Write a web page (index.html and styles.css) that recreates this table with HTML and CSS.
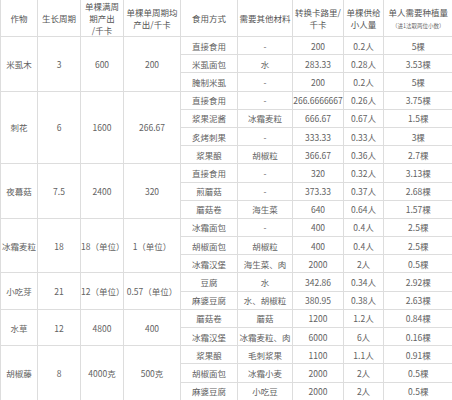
FILE: index.html
```html
<!DOCTYPE html>
<html lang="zh-CN">
<head>
<meta charset="utf-8">
<link rel="stylesheet" href="styles.css">
</head>
<body>
<table class="crops">
<colgroup>
<col class="c1"><col class="c2"><col class="c3"><col class="c4"><col class="c5"><col class="c6"><col class="c7"><col class="c8"><col class="c9">
</colgroup>
<thead>
<tr class="head">
<th>作物</th>
<th>生长周期</th>
<th>单棵满周<br>期产出<br>/千卡</th>
<th>单棵单周期均<br>产出/千卡</th>
<th>食用方式</th>
<th>需要其他材料</th>
<th>转换卡路里/<br>千卡</th>
<th>单棵供给<br>小人量</th>
<th>单人需要种植量<br><span class="note">（进1法取两位小数）</span></th>
</tr>
</thead>
<tbody>
<tr><td rowspan="3">米虱木</td><td rowspan="3">3</td><td rowspan="3">600</td><td rowspan="3">200</td><td>直接食用</td><td>-</td><td>200</td><td>0.2人</td><td>5棵</td></tr>
<tr><td>米虱面包</td><td>水</td><td>283.33</td><td>0.28人</td><td>3.53棵</td></tr>
<tr><td>腌制米虱</td><td>-</td><td>200</td><td>0.2人</td><td>5棵</td></tr>

<tr><td rowspan="4">刺花</td><td rowspan="4">6</td><td rowspan="4">1600</td><td rowspan="4">266.67</td><td>直接食用</td><td>-</td><td>266.6666667</td><td>0.26人</td><td>3.75棵</td></tr>
<tr><td>浆果泥酱</td><td>冰霜麦粒</td><td>666.67</td><td>0.67人</td><td>1.5棵</td></tr>
<tr><td>炙烤刺果</td><td>-</td><td>333.33</td><td>0.33人</td><td>3棵</td></tr>
<tr><td>浆果酿</td><td>胡椒粒</td><td>366.67</td><td>0.36人</td><td>2.7棵</td></tr>

<tr><td rowspan="3">夜幕菇</td><td rowspan="3">7.5</td><td rowspan="3">2400</td><td rowspan="3">320</td><td>直接食用</td><td>-</td><td>320</td><td>0.32人</td><td>3.13棵</td></tr>
<tr><td>煎蘑菇</td><td>-</td><td>373.33</td><td>0.37人</td><td>2.68棵</td></tr>
<tr><td>蘑菇卷</td><td>海生菜</td><td>640</td><td>0.64人</td><td>1.57棵</td></tr>

<tr><td rowspan="3">冰霜麦粒</td><td rowspan="3">18</td><td rowspan="3">18（单位）</td><td rowspan="3">1（单位）</td><td>冰霜面包</td><td>-</td><td>400</td><td>0.4人</td><td>2.5棵</td></tr>
<tr><td>胡椒面包</td><td>胡椒粒</td><td>400</td><td>0.4人</td><td>2.5棵</td></tr>
<tr><td>冰霜汉堡</td><td>海生菜、肉</td><td>2000</td><td>2人</td><td>0.5棵</td></tr>

<tr><td rowspan="2">小吃芽</td><td rowspan="2">21</td><td rowspan="2">12（单位）</td><td rowspan="2">0.57（单位）</td><td>豆腐</td><td>水</td><td>342.86</td><td>0.34人</td><td>2.92棵</td></tr>
<tr><td>麻婆豆腐</td><td>水、胡椒粒</td><td>380.95</td><td>0.38人</td><td>2.63棵</td></tr>

<tr><td rowspan="2">水草</td><td rowspan="2">12</td><td rowspan="2">4800</td><td rowspan="2">400</td><td>蘑菇卷</td><td>蘑菇</td><td>1200</td><td>1.2人</td><td>0.84棵</td></tr>
<tr><td>冰霜汉堡</td><td>冰霜麦粒、肉</td><td>6000</td><td>6人</td><td>0.16棵</td></tr>

<tr><td rowspan="3">胡椒藤</td><td rowspan="3">8</td><td rowspan="3">4000克</td><td rowspan="3">500克</td><td>浆果酿</td><td>毛刺浆果</td><td>1100</td><td>1.1人</td><td>0.91棵</td></tr>
<tr><td>胡椒面包</td><td>冰霜小麦</td><td>2000</td><td>2人</td><td>0.5棵</td></tr>
<tr><td>麻婆豆腐</td><td>小吃豆</td><td>2000</td><td>2人</td><td>0.5棵</td></tr>
</tbody>
</table>
</body>
</html>
```

FILE: styles.css
```css
html, body {
  margin: 0;
  padding: 0;
  background: #ffffff;
}

.crops {
  border-collapse: collapse;
  table-layout: fixed;
  width: 452px;
  font-family: "Noto Sans CJK SC", "Noto Sans", sans-serif;
  font-size: 8.5px;
  color: #626262;
}

.c1 { width: 37px; }
.c2 { width: 43px; }
.c3 { width: 43px; }
.c4 { width: 57px; }
.c5 { width: 57px; }
.c6 { width: 55px; }
.c7 { width: 51px; }
.c8 { width: 40px; }
.c9 { width: 69px; }

.crops th,
.crops td {
  border: 1px solid #dddddd;
  padding: 0;
  text-align: center;
  vertical-align: middle;
  white-space: nowrap;
  overflow: visible;
}

.crops thead th {
  border-top: none;
  height: 35px;
  line-height: 12px;
  font-weight: normal;
  color: #555555;
}

.crops tbody td {
  height: 17.2px;
  line-height: 12px;
}

.crops th:last-child,
.crops td:last-child {
  border-right: none;
}

.note {
  font-size: 5.5px;
  line-height: 8px;
  color: #6a6a6a;
}
```
